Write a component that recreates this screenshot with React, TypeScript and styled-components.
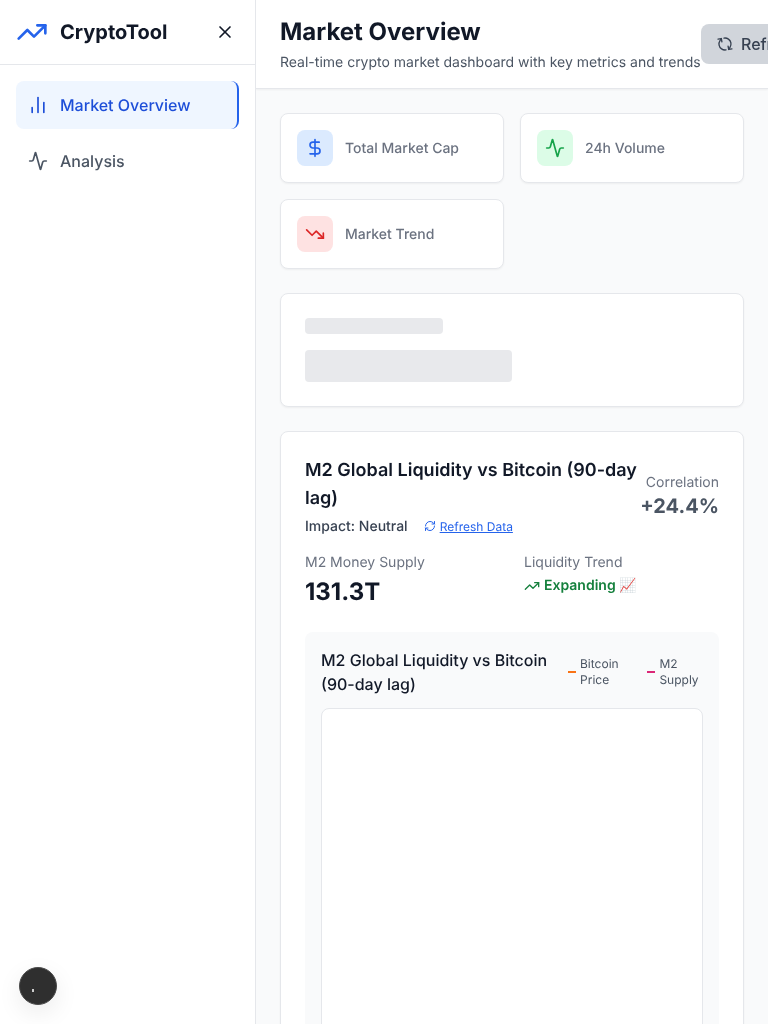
import React from "react";
import styled, { createGlobalStyle } from "styled-components";
import { Activity, ChartNoAxesColumn, DollarSign, RefreshCw, TrendingDown, TrendingUp, X } from "lucide-react";

const Global = createGlobalStyle`
  html, body { margin: 0; padding: 0; height: 1024px; overflow: hidden; }
  * { box-sizing: border-box; }
  body {
    font-family: Inter, "Liberation Sans", sans-serif; background: #f9fafb; color: #111827;
    text-rendering: geometricPrecision; -webkit-font-smoothing: antialiased;
  }
`;

const Shell = styled.div`display: flex; width: 768px; height: 1024px; overflow: hidden; will-change: transform;`;
const Sidebar = styled.aside`
  width: 256px; flex: none; background: #fff; border-right: 1px solid #e5e7eb;
  display: flex; flex-direction: column;
`;
const Brand = styled.div`
  height: 65px; border-bottom: 1px solid #e5e7eb; padding: 0 16px;
  display: flex; align-items: center; justify-content: space-between;
`;
const BrandLeft = styled.div`display: flex; align-items: center; gap: 12px; color: #2563eb;`;
const BrandName = styled.span`font-size: 20px; line-height: 28px; font-weight: 700; color: #111827;`;
const CloseButton = styled.button`
  width: 28px; height: 28px; border: 0; background: none; padding: 0; color: #111827;
  display: flex; align-items: center; justify-content: center;
`;
const Nav = styled.nav`padding: 16px; display: flex; flex-direction: column; gap: 8px;`;
const NavItem = styled.a<{ $active?: boolean }>`
  height: 48px; padding: 0 12px; display: flex; align-items: center; gap: 12px;
  border-radius: 8px; font-size: 16px; font-weight: 500;
  color: ${(p) => (p.$active ? "#1d4ed8" : "#4b5563")};
  background: ${(p) => (p.$active ? "#eff6ff" : "transparent")};
  border-right: ${(p) => (p.$active ? "2px solid #2563eb" : "0")};
`;
const Main = styled.main`flex: 1; min-width: 0; overflow: hidden; display: flex; flex-direction: column;`;
const Header = styled.header`
  height: 89px; flex: none; background: #fff; border-bottom: 1px solid #e5e7eb;
  box-shadow: 0 1px 2px rgba(0,0,0,.05); padding: 16px 24px; display: flex; align-items: flex-start;
`;
const HeaderText = styled.div`flex: none; width: 421px;`;
const PageTitle = styled.h1`margin: 0; font-size: 24px; line-height: 32px; font-weight: 700; color: #111827;`;
const PageSub = styled.p`margin: 3px 0 0; font-size: 14px; line-height: 24px; color: #4b5563; white-space: nowrap;`;
const RefreshButton = styled.button`
  flex: none; margin-top: 8px; height: 40px; padding: 0 16px; border: 0; border-radius: 8px;
  background: #d1d5db; color: #374151; font: 500 16px Inter, sans-serif; white-space: nowrap;
  display: flex; align-items: center; gap: 8px;
`;
const SpinIcon = styled(RefreshCw)`flex: none; transform: rotate(80deg);`;
const Content = styled.div`padding: 24px; display: flex; flex-direction: column; gap: 24px;`;
const StatGrid = styled.div`display: grid; grid-template-columns: 1fr 1fr; gap: 16px;`;
const Card = styled.section`
  background: #fff; border: 1px solid #e5e7eb; border-radius: 8px; box-shadow: 0 1px 2px rgba(0,0,0,.05);
`;
const StatCard = styled(Card)`height: 70px; padding: 16px; display: flex; align-items: center; gap: 12px;`;
const StatIcon = styled.div<{ $bg: string; $fg: string }>`
  width: 36px; height: 36px; border-radius: 8px; background: ${(p) => p.$bg}; color: ${(p) => p.$fg};
  display: flex; align-items: center; justify-content: center;
`;
const StatLabel = styled.span`font-size: 14px; font-weight: 500; color: #6b7280;`;
const SkeletonCard = styled(Card)`height: 114px; padding: 24px; display: flex; flex-direction: column; gap: 16px;`;
const Bone = styled.div<{ $w: number; $h: number }>`
  width: ${(p) => p.$w}px; height: ${(p) => p.$h}px; background: #e8e9ec; border-radius: 4px;
`;
const M2Card = styled(Card)`padding: 24px;`;
const M2Head = styled.div`display: flex; justify-content: space-between; align-items: flex-start;`;
const M2HeadText = styled.div`flex: 1; min-width: 0;`;
const M2Title = styled.h2`margin: 1px 0 0; font-size: 18px; line-height: 28px; font-weight: 600; color: #111827;`;
const MetaRow = styled.div`display: flex; align-items: center; gap: 16px; margin-top: 3px; height: 20px;`;
const Impact = styled.span`font-size: 14px; font-weight: 500; color: #374151;`;
const RefreshLink = styled.a`
  display: inline-flex; align-items: center; gap: 4px; font-size: 12px; color: #2563eb;
`;
const RefreshLinkText = styled.span`text-decoration: underline;`;
const Corr = styled.div`text-align: right; padding-top: 17px; flex: none;`;
const CorrLabel = styled.div`font-size: 14px; line-height: 20px; color: #6b7280;`;
const CorrValue = styled.div`font-size: 20px; line-height: 27px; font-weight: 700; color: #4b5563;`;
const Metrics = styled.div`display: grid; grid-template-columns: 1fr 1fr; gap: 24px; margin-top: 17px;`;
const MetricLabel = styled.div`font-size: 14px; line-height: 20px; color: #6b7280; margin-bottom: 3px;`;
const MetricValue = styled.div`font-size: 24px; line-height: 32px; font-weight: 700; color: #111827;`;
const TrendValue = styled.div`
  display: flex; align-items: center; gap: 4px; margin-top: 2px;
  font-size: 14px; line-height: 20px; font-weight: 600; color: #15803d;
`;
const ChartPanel = styled.div`margin-top: 24px; background: #f9fafb; border-radius: 8px; padding: 16px;`;
const ChartHead = styled.div`display: flex; justify-content: space-between; align-items: center; margin-bottom: 12px;`;
const ChartTitle = styled.h3`margin: 0; width: 240px; font-size: 16px; line-height: 24px; font-weight: 500; color: #111827;`;
const Legend = styled.div`display: flex; gap: 16px;`;
const LegendItem = styled.div`display: flex; align-items: center; gap: 4px; font-size: 12px; line-height: 16px; color: #4b5563;`;
const Swatch = styled.span<{ $c: string }>`width: 8px; height: 2px; background: ${(p) => p.$c}; flex: none;`;
const LegendText = styled.span<{ $w: number }>`width: ${(p) => p.$w}px;`;
const ChartBox = styled.div`height: 400px; background: #fff; border: 1px solid #e5e7eb; border-radius: 8px;`;
const Floating = styled.div`
  position: fixed; left: 19px; top: 967px; width: 38px; height: 38px; border-radius: 50%;
  background: #2f2f2f; border: 1px solid #4a4a4a; box-shadow: 0 8px 24px rgba(0,0,0,.08);
  display: flex; align-items: center; justify-content: center;
`;
const Dot = styled.span`width: 2px; height: 3px; background: #ccc; margin: 8px 10px 0 0;`;

export default function App() {
  return (
    <Shell>
      <Global />
      <Sidebar>
        <Brand>
          <BrandLeft>
            <TrendingUp size={32} strokeWidth={2} />
            <BrandName>CryptoTool</BrandName>
          </BrandLeft>
          <CloseButton><X size={20} /></CloseButton>
        </Brand>
        <Nav>
          <NavItem $active>
            <ChartNoAxesColumn size={20} />Market Overview
          </NavItem>
          <NavItem>
            <Activity size={20} />Analysis
          </NavItem>
        </Nav>
      </Sidebar>
      <Main>
        <Header>
          <HeaderText>
            <PageTitle>Market Overview</PageTitle>
            <PageSub>Real-time crypto market dashboard with key metrics and trends</PageSub>
          </HeaderText>
          <RefreshButton><SpinIcon size={16} />Refresh</RefreshButton>
        </Header>
        <Content>
          <StatGrid>
            <StatCard>
              <StatIcon $bg="#dbeafe" $fg="#2563eb"><DollarSign size={20} /></StatIcon>
              <StatLabel>Total Market Cap</StatLabel>
            </StatCard>
            <StatCard>
              <StatIcon $bg="#dcfce7" $fg="#16a34a"><Activity size={20} /></StatIcon>
              <StatLabel>24h Volume</StatLabel>
            </StatCard>
            <StatCard>
              <StatIcon $bg="#fee2e2" $fg="#dc2626"><TrendingDown size={20} /></StatIcon>
              <StatLabel>Market Trend</StatLabel>
            </StatCard>
          </StatGrid>
          <SkeletonCard>
            <Bone $w={138} $h={16} />
            <Bone $w={207} $h={32} />
          </SkeletonCard>
          <M2Card>
            <M2Head>
              <M2HeadText>
                <M2Title>M2 Global Liquidity vs Bitcoin (90-day lag)</M2Title>
                <MetaRow>
                  <Impact>Impact: Neutral</Impact>
                  <RefreshLink><RefreshCw size={12} /><RefreshLinkText>Refresh Data</RefreshLinkText></RefreshLink>
                </MetaRow>
              </M2HeadText>
              <Corr>
                <CorrLabel>Correlation</CorrLabel>
                <CorrValue>+24.4%</CorrValue>
              </Corr>
            </M2Head>
            <Metrics>
              <div>
                <MetricLabel>M2 Money Supply</MetricLabel>
                <MetricValue>131.3T</MetricValue>
              </div>
              <div>
                <MetricLabel>Liquidity Trend</MetricLabel>
                <TrendValue><TrendingUp size={16} />Expanding 📈</TrendValue>
              </div>
            </Metrics>
            <ChartPanel>
              <ChartHead>
                <ChartTitle>M2 Global Liquidity vs Bitcoin (90-day lag)</ChartTitle>
                <Legend>
                  <LegendItem><Swatch $c="#f97316" /><LegendText $w={51.4}>Bitcoin Price</LegendText></LegendItem>
                  <LegendItem><Swatch $c="#db2777" /><LegendText $w={43.6}>M2 Supply</LegendText></LegendItem>
                </Legend>
              </ChartHead>
              <ChartBox />
            </ChartPanel>
          </M2Card>
        </Content>
      </Main>
      <Floating><Dot /></Floating>
    </Shell>
  );
}
